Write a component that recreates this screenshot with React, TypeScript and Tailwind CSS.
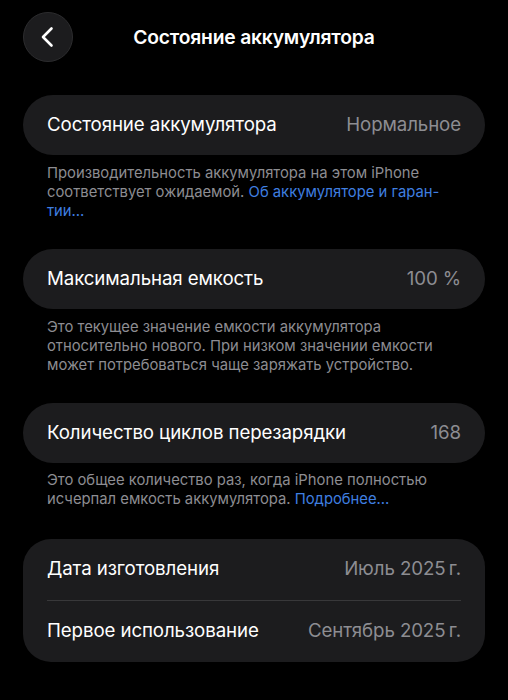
import React from "react";

const font = { fontFamily: 'Inter, "Noto Sans", sans-serif' };

function Row({ label, value, h = "h-[60px]" }: { label: string; value: string; h?: string }) {
  return (
    <div className={`flex ${h} items-center justify-between px-[24px]`}>
      <span className="text-[18.7px] tracking-[-0.1px] text-white">{label}</span>
      <span className="text-[18.7px] tracking-[-0.1px] text-[#8d8d92]">{value}</span>
    </div>
  );
}

export default function App() {
  return (
    <div className="min-h-[700px] w-full bg-black text-white" style={font}>
      <div className="relative flex h-[74px] items-center justify-center">
        <button className="absolute left-[23px] top-[12px] flex h-[50px] w-[50px] items-center justify-center rounded-full border border-[#2c2c2e] bg-[#1c1c1e]">
          <svg width="20" height="22" viewBox="0 0 20 22" fill="none">
            <path d="M13.5 2.5 L5 11 L13.5 19.5" stroke="white" strokeWidth="2.6" strokeLinecap="round" strokeLinejoin="round" />
          </svg>
        </button>
        <h1 className="text-[19.3px] font-semibold tracking-[-0.2px]">Состояние аккумулятора</h1>
      </div>

      <div className="px-[23px] pt-[21px]">
        <div className="rounded-full bg-[#1c1c1e]">
          <Row label="Состояние аккумулятора" value="Нормальное" />
        </div>
        <p className="mb-[28px] mt-[9px] px-[24px] text-[14.8px] leading-[19px] text-[#8d8d92]">
          Производительность аккумулятора на этом iPhone<br />
          соответствует ожидаемой.{" "}
          <span className="text-[#3f7fe0]">Об аккумуляторе и гаран-<br />тии…</span>
        </p>

        <div className="rounded-full bg-[#1c1c1e]">
          <Row label="Максимальная емкость" value="100 %" />
        </div>
        <p className="mb-[28px] mt-[9px] px-[24px] text-[14.8px] leading-[19px] text-[#8d8d92]">
          Это текущее значение емкости аккумулятора<br />
          относительно нового. При низком значении емкости<br />
          может потребоваться чаще заряжать устройство.
        </p>

        <div className="rounded-full bg-[#1c1c1e]">
          <Row label="Количество циклов перезарядки" value="168" />
        </div>
        <p className="mb-[30px] mt-[8px] px-[24px] text-[14.8px] leading-[19px] text-[#8d8d92]">
          Это общее количество раз, когда iPhone полностью<br />
          исчерпал емкость аккумулятора.{" "}
          <span className="text-[#3f7fe0]">Подробнее…</span>
        </p>

        <div className="rounded-[28px] bg-[#1c1c1e]">
          <Row label="Дата изготовления" value={"Июль 2025\u202Fг."} h="h-[61px]" />
          <div className="mx-[24px] h-px bg-[#38383a]" />
          <Row label="Первое использование" value={"Сентябрь 2025\u202Fг."} h="h-[61px]" />
        </div>
      </div>
    </div>
  );
}
